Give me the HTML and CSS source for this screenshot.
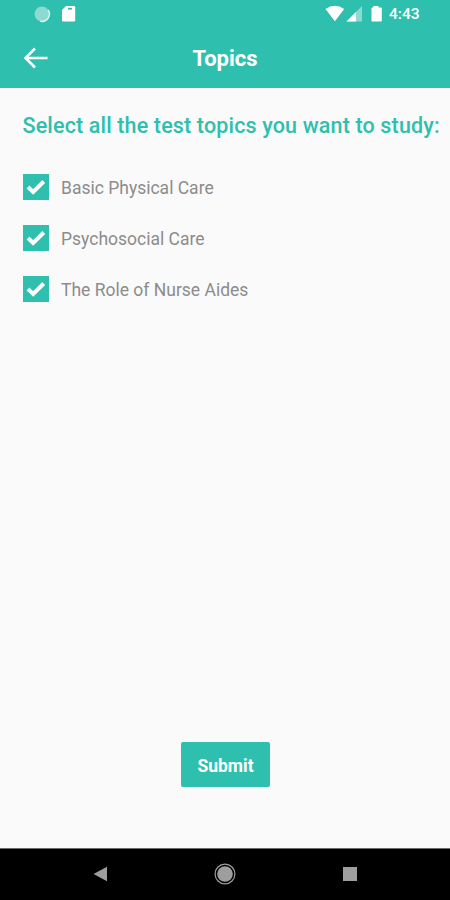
FILE: index.html
```html
<!DOCTYPE html>
<html lang="en">
<head>
    <meta charset="UTF-8">
    <meta name="viewport" content="width=device-width, initial-scale=1.0">
    <title>Topics</title>
    <link rel="stylesheet" href="styles.css">
</head>
<body>
    <div class="screen">
        <header class="header">
            <div class="status-bar">
                <svg class="status-left" width="46" height="28" viewBox="0 0 46 28">
                    <circle cx="8" cy="14" r="7.5" fill="#8ddbd0"/>
                    <path d="M14.2 9.8A7.5 7.5 0 0 1 6 21.2" fill="none" stroke="#e3f7f4" stroke-width="1.3"/>
                    <path d="M32 6h8q1.2 0 1.2 1.2v13.1q0 1.2-1.2 1.2H29.2q-1.2 0-1.2-1.2V10z" fill="#fff"/>
                    <path d="M34 8.7h4" stroke="#2fbfae" stroke-width="1.8"/>
                </svg>
                <svg class="status-right" width="58" height="28" viewBox="0 0 58 28">
                    <path d="M.5 9Q9.8 2.5 19.2 9L9.9 21.3z" fill="#fff"/>
                    <path d="M37 6v15.5H21.5z" fill="#8ddbd0"/>
                    <path d="M31 12v9.500h-9.500z" fill="#fff"/>
                    <path d="M48.5 6h5v1.500h2.500q.8 0 .8.8v12.400q0 .8-.8.8h-8.700q-.8 0-.8-.8V8.300q0-.8.8-.8h1.200z" fill="#fff"/>
                </svg>
                <span class="time">4:43</span>
            </div>
            <div class="title-bar">
                <svg class="back" width="26" height="24" viewBox="0 0 26 24">
                    <path d="M24.5 12H2.500M12 2.500L2.500 12l9.500 9.500" fill="none" stroke="#fff" stroke-width="2.5"/>
                </svg>
                <h1>Topics</h1>
            </div>
        </header>

        <main class="content">
            <h2>Select all the test topics you want to study:</h2>
            <ul class="topics">
                <li>
                    <svg class="check" viewBox="0 0 26 26"><path d="M5 13l5.200 5L20.700 7.500"/></svg>
                    <span>Basic Physical Care</span>
                </li>
                <li>
                    <svg class="check" viewBox="0 0 26 26"><path d="M5 13l5.200 5L20.700 7.500"/></svg>
                    <span>Psychosocial Care</span>
                </li>
                <li>
                    <svg class="check" viewBox="0 0 26 26"><path d="M5 13l5.200 5L20.700 7.500"/></svg>
                    <span>The Role of Nurse Aides</span>
                </li>
            </ul>
            <button class="submit-btn">Submit</button>
        </main>

        <nav class="nav-bar">
            <svg width="24" height="24" viewBox="0 0 24 24"><path d="M5.500 12L19 4.800v14.400z" fill="#9e9e9e"/></svg>
            <svg width="24" height="24" viewBox="0 0 24 24">
                <circle cx="12" cy="12" r="9.9" fill="none" stroke="#9e9e9e" stroke-width="1.2"/>
                <circle cx="12" cy="12" r="7.8" fill="#9e9e9e"/>
            </svg>
            <svg width="24" height="24" viewBox="0 0 24 24"><path d="M5 5h14v14H5z" fill="#9e9e9e"/></svg>
        </nav>
    </div>
</body>
</html>
```

FILE: styles.css
```css
body {
    margin: 0;
    font-family: Roboto, sans-serif;
    background: #fafafa;
}
.screen {
    display: flex;
    flex-direction: column;
    width: 450px;
    height: 900px;
    overflow: hidden;
}
.header {
    height: 88px;
    background: #2fbfae;
    color: #fff;
}
.status-bar {
    display: flex;
    align-items: center;
    height: 28px;
    padding: 0 30px 0 34px;
}
.status-right {
    margin-left: auto;
}
.time {
    width: 31px;
    margin-left: 6px;
    font-size: 15.5px;
    font-weight: 500;
    line-height: 29px;
    white-space: nowrap;
}
.title-bar {
    display: grid;
    grid-template-columns: 50px 1fr 50px;
    align-items: center;
    height: 60px;
}
.back {
    margin-left: 23px;
    margin-top: -1px;
}
h1 {
    margin: 0;
    padding-top: 1px;
    font-size: 22px;
    font-weight: 700;
    line-height: 60px;
    text-align: center;
}
.content {
    display: flex;
    flex: 1;
    flex-direction: column;
    padding: 24px 0 61px 23px;
}
h2 {
    margin: 0 0 0 -0.5px;
    color: #2fbfae;
    font-size: 21.5px;
    font-weight: 500;
    line-height: 28px;
    letter-spacing: 0.15px;
    white-space: nowrap;
}
.topics {
    display: flex;
    flex-direction: column;
    gap: 25px;
    margin: 34px 0 0;
    padding: 0;
    list-style: none;
}
.topics li {
    display: flex;
    align-items: center;
    gap: 12px;
    height: 26px;
    color: #8c8c8c;
    font-size: 17.5px;
    line-height: 26px;
}
.topics span {
    padding-top: 2px;
}
.check {
    width: 26px;
    height: 26px;
    background: #2fbfae;
}
.check path {
    fill: none;
    stroke: #fff;
    stroke-width: 4;
}
.submit-btn {
    width: 89px;
    height: 45px;
    margin: auto auto 0 158px;
    padding: 3px 0 0;
    border: none;
    border-radius: 2px;
    background: #2fbfae;
    color: #fff;
    font-family: inherit;
    font-size: 17.5px;
    font-weight: 700;
}
.nav-bar {
    display: flex;
    justify-content: space-between;
    align-items: center;
    box-sizing: border-box;
    height: 52px;
    padding: 0 88px 1px;
    border-top: 1px solid #6b6b6b;
    background: #000;
}
```
